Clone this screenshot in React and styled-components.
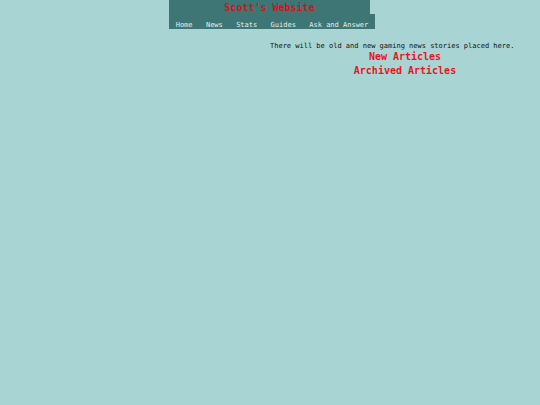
import React from "react";
import styled, { createGlobalStyle } from "styled-components";

const GlobalStyle = createGlobalStyle`
  html, body {
    margin: 0;
    padding: 0;
    background-color: #a8d4d4;
    font-family: "DejaVu Sans Mono", "Liberation Mono", monospace;
  }
`;

const links = ["Home", "News", "Stats", "Guides", "Ask and Answer"];

const App = () => {
  return (
    <Page>
      <GlobalStyle />
      <Header>
        <Title>Scott's Website</Title>
        <Nav>
          {links.map((link) => (
            <NavLink key={link} href="#">
              {link}
            </NavLink>
          ))}
        </Nav>
      </Header>
      <Main>
        <Intro>There will be old and new gaming news stories placed here.</Intro>
        <Heading>New Articles</Heading>
        <Heading>Archived Articles</Heading>
      </Main>
    </Page>
  );
};

export default App;

const Page = styled.div`
  width: 540px;
  min-height: 405px;
`;

const Header = styled.header`
  margin-left: 169px;
  display: flex;
  flex-direction: column;
  align-items: flex-start;
`;

const Title = styled.div`
  box-sizing: border-box;
  width: 201px;
  height: 14px;
  padding-top: 1px;
  background-color: #3d7674;
  color: #d8121a;
  font-size: 10px;
  font-weight: bold;
  line-height: 13px;
  text-align: center;
`;

const Nav = styled.nav`
  box-sizing: border-box;
  display: flex;
  height: 15px;
  align-items: flex-end;
  background-color: #3d7674;
`;

const NavLink = styled.a`
  padding: 0 6.7px;
  color: #e6eeee;
  font-size: 7px;
  line-height: 7px;
  text-decoration: none;
`;

const Main = styled.main`
  margin-left: 270px;
  width: 270px;
  padding-top: 13px;
`;

const Intro = styled.p`
  margin: 0;
  font-size: 7px;
  line-height: 8px;
  color: #111;
  white-space: nowrap;
`;

const Heading = styled.h2`
  margin: 0;
  text-align: center;
  font-size: 10px;
  line-height: 14px;
  color: #e8151b;
  font-weight: bold;
`;
